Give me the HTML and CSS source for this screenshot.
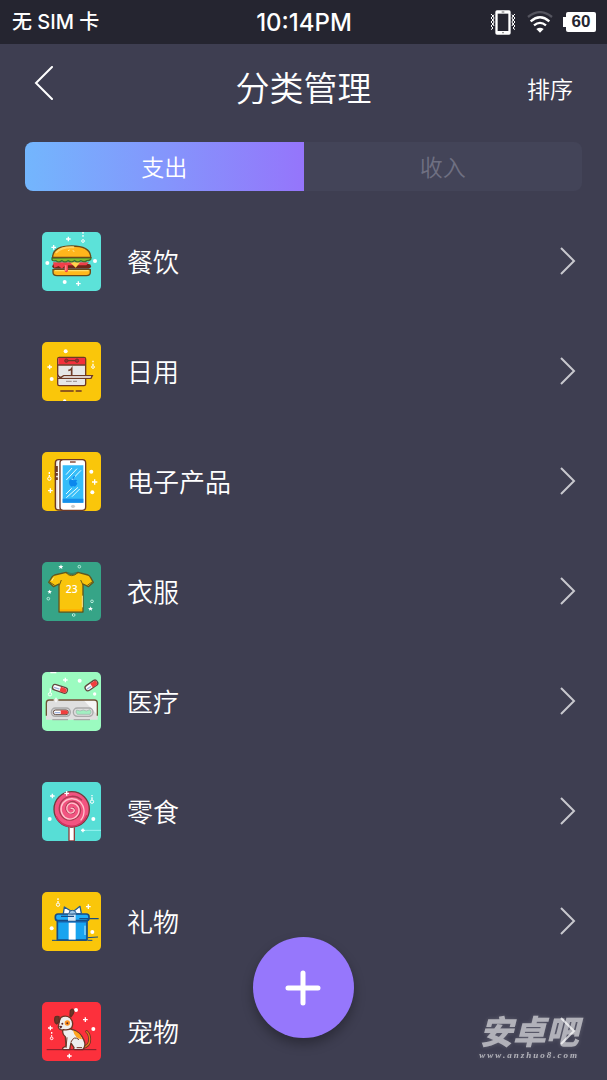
FILE: index.html
```html
<!DOCTYPE html>
<html lang="zh-CN">

<head>
    <meta charset="utf-8">
    <meta name="viewport" content="width=device-width, initial-scale=1.0">
    <title>分类管理</title>
    <link rel="stylesheet" href="styles.css">
</head>

<body>

    <div class="statusbar">
        <span class="carrier">无 SIM 卡</span>
        <span class="time">10:14PM</span>
        <div class="status_icons">
            <svg class="vibrate" viewBox="0 0 78 75">
                <rect x="16" y="1" width="46" height="73" rx="5" fill="#fff" />
                <rect x="23" y="11" width="32" height="52" fill="#252530" />
                <path d="M35 6h8M36 68h6" stroke="#999" stroke-width="4" />
                <path d="M3 12l6 6-6 6 6 6-6 6 6 6-6 6 6 6-6 5M12 14l-3 4 3 6-3 6 3 6-3 6 3 6M75 12l-6 6 6 6-6 6 6 6-6 6 6 6-6 6 6 5M66 14l3 4-3 6 3 6-3 6 3 6-3 6" fill="none" stroke="#fff" stroke-width="3" />
            </svg>
            <svg class="wifi" viewBox="0 0 78 66" fill="none" stroke-width="7">
                <path d="M3 18Q39-11 75 18" stroke="#55555f" />
                <path d="M11 31Q39 7 67 31M21 43Q39 28 57 43" stroke="#fff" />
                <path d="M28 54Q39 47 50 54L39 65z" fill="#fff" />
            </svg>
            <span class="battery">60</span>
        </div>
    </div>

    <header>
        <button class="back" aria-label="返回">
            <svg viewBox="0 0 20 34"><path d="M18 1L2 17l16 16" /></svg>
        </button>
        <h1>分类管理</h1>
        <button class="sort">排序</button>
    </header>

    <nav>
        <button class="filter valgt">支出</button>
        <button class="filter">收入</button>
    </nav>

    <main>
        <a class="kategori" href="#mad">
            <svg class="ikon" viewBox="18 20 177 177">
                <rect x="18" y="20" width="177" height="177" fill="#5ce2d9" />
                <g stroke="#fff" stroke-width="4"><path d="M97 34v14M90 41h14M53 59v14M46 66h14M127 168v14M120 175h14" /><path d="M141 20v18" stroke-dasharray="5 4" /></g>
                <circle cx="141" cy="47" r="4" fill="none" stroke="#fff" stroke-width="3" />
                <g fill="#fff"><circle cx="34" cy="113" r="6" /><circle cx="177" cy="107" r="6" /><circle cx="86" cy="170" r="6" /></g>
                <path d="M51 133h112v8q0 10-12 10H63q-12 0-12-10z" fill="#ffb91d" stroke="#6b4a18" stroke-width="4" />
                <path d="M56 136h102" stroke="#ffe06a" stroke-width="4" />
                <rect x="49" y="116" width="116" height="14" rx="7" fill="#6e2718" />
                <path d="M51 111h108l-8 9H96v15q0 6-5 6t-5-6v-14l-8 9-10-8-13 5z" fill="#ef3f49" />
                <path d="M89 120v17" stroke="#ff8288" stroke-width="5" />
                <path d="M102 111h31l-14 16z" fill="#ffd44b" />
                <path d="M48 98q-2 11 12 8 8 7 18 0 9 7 18 0 10 7 19 0 10 7 19 0 12 6 18 0 14 0 13-9z" fill="#83bd2f" stroke="#3e7130" stroke-width="4" />
                <path d="M50 96q0-34 57-34t57 34z" fill="#ffb51c" stroke="#6b4a18" stroke-width="4" />
                <path d="M61 81q16-17 51-15" fill="none" stroke="#ffd464" stroke-width="6" stroke-linecap="round" />
                <path d="M96 76l5-2m9 2l5 2" stroke="#fff0a0" stroke-width="3" />
            </svg>
            <span class="navn">餐饮</span>
            <svg class="pil" viewBox="0 0 16 28"><path d="M1 1l13 13L1 27" /></svg>
        </a>

        <a class="kategori" href="#daglig">
            <svg class="ikon" viewBox="18 19 177 177">
                <rect x="18" y="19" width="177" height="177" fill="#fac60a" />
                <g fill="#fff"><circle cx="89" cy="47" r="6" /><circle cx="47" cy="130" r="6" /><circle cx="86" cy="196" r="5" /></g>
                <path d="M41 87v14M34 94h14M171 75v5m0 4v4" stroke="#fff" stroke-width="4" />
                <circle cx="171" cy="94" r="4" fill="none" stroke="#fff" stroke-width="3" />
                <rect x="65" y="65" width="84" height="85" rx="5" fill="#e7e7e7" stroke="#6e3925" stroke-width="4" />
                <path d="M67 67h80v20H67z" fill="#f2303b" />
                <path d="M66 88h82" stroke="#6e3925" stroke-width="4" />
                <path d="M91 75h32" stroke="#6e3925" stroke-width="4" />
                <circle cx="91" cy="75" r="5" fill="#a72933" stroke="#6e3925" stroke-width="3" /><circle cx="123" cy="75" r="5" fill="#a72933" stroke="#6e3925" stroke-width="3" />
                <path d="M97 104q7 0 10-5v20" fill="none" stroke="#6e3925" stroke-width="5" />
                <path d="M65 117q2 8 10 8l8-5h86l-4 8H66" fill="#fff" stroke="#6e3925" stroke-width="4" />
                <path d="M90 137h17m4 0h12" stroke="#a69e9c" stroke-width="4" />
                <path d="M73 166h40m6 0h18" stroke="#6e3925" stroke-width="4" />
            </svg>
            <span class="navn">日用</span>
            <svg class="pil" viewBox="0 0 16 28"><path d="M1 1l13 13L1 27" /></svg>
        </a>

        <a class="kategori" href="#elektronik">
            <svg class="ikon" viewBox="18 19 177 177">
                <rect x="18" y="19" width="177" height="177" fill="#fac60a" />
                <g fill="#fff"><circle cx="166" cy="78" r="6" /><circle cx="169" cy="140" r="6" /></g>
                <path d="M176 101v16M168 109h16M43 128v14M36 135h14M40 79v6m0 3v5" stroke="#fff" stroke-width="4" />
                <circle cx="40" cy="99" r="5" fill="none" stroke="#fff" stroke-width="3" />
                <rect x="58" y="42" width="40" height="151" rx="10" fill="#ded8d6" stroke="#6e3925" stroke-width="4" />
                <path d="M67 45v145" stroke="#fff" stroke-width="5" />
                <path d="M61 61v18m0 3v8m0 5v8" stroke="#6e3925" stroke-width="9" />
                <rect x="72" y="42" width="77" height="152" rx="10" fill="#fff" stroke="#6e3925" stroke-width="4" />
                <path d="M80 59h62v112H80z" fill="#36bdf9" />
                <path d="M80 159h62v12H80z" fill="#168eea" />
                <path d="M102 49h17" stroke="#884e3b" stroke-width="4" />
                <path d="M90 87l18-20M91 103l32-34M107 103l28-29M90 145l17-17M91 156l35-31M108 153l23-23" stroke="#eaffff" stroke-width="3" />
                <path d="M108 102q-8-4-9 6 0 12 8 15l5-2 5 2q6-4 7-10-7-4 0-9-5-4-11 0z" fill="#0c88ed" />
                <path d="M111 100q1-7 6-7" fill="none" stroke="#0c88ed" stroke-width="4" />
                <ellipse cx="111" cy="182" rx="6" ry="5" fill="#ccc" />
            </svg>
            <span class="navn">电子产品</span>
            <svg class="pil" viewBox="0 0 16 28"><path d="M1 1l13 13L1 27" /></svg>
        </a>

        <a class="kategori" href="#toej">
            <svg class="ikon" viewBox="18 18 177 177">
                <rect x="18" y="18" width="177" height="177" fill="#36a487" />
                <path d="M90 49q18 13 36 0l30 8q6 3 8 8l8 14-15 13-16-8v84H69V84l-16 8-15-13 10-16q3-4 8-6z" fill="#f9c50c" stroke="#5f5720" stroke-width="4" stroke-linejoin="round" />
                <path d="M72 163h66" stroke="#ffae00" stroke-width="6" fill="none" />
                <path d="M90 50q16 18 36 0M76 72l-6 16M141 87l-7-15M41 78l15 10M168 78l-14 10" fill="none" stroke="#6d5b18" stroke-width="3" />
                <path d="M95 50q13 7 25 0" fill="none" stroke="#378365" stroke-width="5" />
                <path d="M53 65l-6 10M139 119v35" stroke="#ffe894" stroke-width="3" />
                <text class="nummer" x="107" y="111">23</text>
                <g fill="#fff"><path d="M75 25l2 5h5l-4 4 1 5-5-3-4 3 1-5-4-4h6zM41 101l2 4h5l-4 3 1 5-4-2-4 2 1-5-4-3h5zM164 151l2 5h5l-4 3 1 5-5-3-4 3 1-5-4-3h6z" /></g>
                <g fill="none" stroke="#b9eddd" stroke-width="3"><circle cx="130" cy="32" r="4" /><circle cx="37" cy="128" r="4" /><circle cx="168" cy="136" r="4" /><circle cx="113" cy="177" r="4" /></g>
            </svg>
            <span class="navn">衣服</span>
            <svg class="pil" viewBox="0 0 16 28"><path d="M1 1l13 13L1 27" /></svg>
        </a>

        <a class="kategori" href="#medicin">
            <svg class="ikon" viewBox="18 17 177 177">
                <rect x="18" y="17" width="177" height="177" fill="#9bfbc0" />
                <path d="M43 19h18M88 34v14M81 41h14M43 66v12" stroke="#fff" stroke-width="4" />
                <circle cx="131" cy="43" r="6" fill="#fff" /><circle cx="176" cy="83" r="5" fill="#fff" /><circle cx="42" cy="84" r="5" fill="none" stroke="#fff" stroke-width="3" />
                <path d="M30 109q0-10 10-10h135q10 0 10 10v51H30z" fill="#dfdfdf" />
                <path d="M143 102h34q7 0 7 7v36z" fill="#f6f6f6" />
                <path d="M31 148v-38q0-9 9-9h135q9 0 9 9v38" fill="none" stroke="#6b5534" stroke-width="4" />
                <path d="M49 160h47m17 0h49" stroke="#aaa" stroke-width="4" />
                <path d="M60 94v14M53 101h14" stroke="#fff" stroke-width="4" />
                <rect x="46" y="125" width="57" height="25" rx="12" fill="#d3d3d3" stroke="#aaa" stroke-width="4" />
                <rect x="112" y="125" width="59" height="25" rx="12" fill="#ddd" stroke="#aaa" stroke-width="4" />
                <path d="M122 131l10 3 10-3 9 3 11-4q7 7 0 14h-38q-7-7-2-13z" fill="#a2efc1" stroke="#9cb2a7" stroke-width="2" />
                <rect x="52" y="131" width="45" height="14" rx="7" fill="#fff" stroke="#624b41" stroke-width="3" />
                <path d="M74 132h16q6 0 6 6t-6 6H74z" fill="#f03e3e" /><path d="M56 139h16" stroke="#9fb4df" stroke-width="4" />
                <g transform="rotate(18 72 67)"><rect x="49" y="59" width="46" height="17" rx="8" fill="#fff" stroke="#624b41" stroke-width="4" /><path d="M73 61h13q7 0 7 7t-7 7H73z" fill="#f03e3e" /><path d="M54 69h17" stroke="#9fb4df" stroke-width="4" /></g>
                <g transform="rotate(-35 166 57)"><rect x="145" y="49" width="42" height="17" rx="8" fill="#fff" stroke="#624b41" stroke-width="4" /><path d="M166 51h12q7 0 7 7t-7 7h-12z" fill="#f03e3e" /><path d="M149 59h15" stroke="#9fb4df" stroke-width="4" /></g>
            </svg>
            <span class="navn">医疗</span>
            <svg class="pil" viewBox="0 0 16 28"><path d="M1 1l13 13L1 27" /></svg>
        </a>

        <a class="kategori" href="#snacks">
            <svg class="ikon" viewBox="18 19 177 177">
                <rect x="18" y="19" width="177" height="177" fill="#57ded6" />
                <path d="M99 148h16v48H99z" fill="#fff" stroke="#8e4040" stroke-width="4" />
                <path d="M99 150h16v7H99z" fill="#c9b1ac" />
                <circle cx="107" cy="101" r="53" fill="#f25481" stroke="#703c3c" stroke-width="4" />
                <path d="M60 122A50 50 0 0 0 153 119" fill="none" stroke="#ce3561" stroke-width="5" />
                <path d="M106 103a5 5 0 0 1 5-7a10 10 0 0 1 3 15a16 16 0 0 1-24-9a21 21 0 0 1 25-24a27 27 0 0 1 17 35a33 33 0 0 1-48 15a37 37 0 0 1-7-51a41 41 0 0 1 61-3" fill="none" stroke="#a93c53" stroke-width="4" />
                <path d="M104 99a7 7 0 0 1 11 6a11 11 0 0 1-18 4a16 16 0 0 1 5-26a22 22 0 0 1 27 22a27 27 0 0 1-41 21a32 32 0 0 1-7-44a36 36 0 0 1 51-4a41 41 0 0 1 2 56" fill="none" stroke="#ffc4cd" stroke-width="4" />
                <path d="M49 54v14M42 61h14M92 46v14M85 53h14M168 58v4m0 3v7" stroke="#fff" stroke-width="4" />
                <circle cx="168" cy="78" r="5" fill="none" stroke="#fff" stroke-width="3" />
                <g fill="#fff"><circle cx="41" cy="130" r="6" /><circle cx="172" cy="130" r="6" /><circle cx="140" cy="164" r="4" /></g>
                <path d="M136 164h59" stroke="#baffff" stroke-width="2" />
                <path d="M135 164h12M141 158v12" stroke="#fff" stroke-width="3" />
            </svg>
            <span class="navn">零食</span>
            <svg class="pil" viewBox="0 0 16 28"><path d="M1 1l13 13L1 27" /></svg>
        </a>

        <a class="kategori" href="#gaver">
            <svg class="ikon" viewBox="18 18 177 177">
                <rect x="18" y="18" width="177" height="177" fill="#fac60a" />
                <path d="M157 55v14M150 62h14M66 37v5m0 3v5" stroke="#fff" stroke-width="4" />
                <circle cx="66" cy="56" r="5" fill="none" stroke="#fff" stroke-width="3" />
                <circle cx="47" cy="127" r="6" fill="#fff" /><circle cx="169" cy="138" r="6" fill="#fff" />
                <path d="M64 101h89v61H64z" fill="#18a4ef" stroke="#174c85" stroke-width="5" />
                <path d="M98 102h21v59H98z" fill="#fff" /><path d="M66 102h85v8H66z" fill="#1876c3" />
                <path d="M147 119v28" stroke="#bceeff" stroke-width="3" />
                <rect x="58" y="84" width="101" height="20" rx="8" fill="#20adf8" stroke="#174c85" stroke-width="5" />
                <path d="M96 84h23v20H96z" fill="#d5e6f5" />
                <path d="M82 83l3-20 25 15 22-17 4 21-27 2z" fill="#fff" stroke="#275c8f" stroke-width="4" stroke-linejoin="round" />
                <path d="M99 82q0-9 10-9t12 9" fill="#9fc9ea" stroke="#275c8f" stroke-width="3" />
                <path d="M130 98h58" stroke="#174c85" stroke-width="4" /><path d="M75 91h39" stroke="#174c85" stroke-width="4" />
                <path d="M48 163h104m4 0h13M155 155l31-2" stroke="#174c85" stroke-width="3" />
            </svg>
            <span class="navn">礼物</span>
            <svg class="pil" viewBox="0 0 16 28"><path d="M1 1l13 13L1 27" /></svg>
        </a>

        <a class="kategori" href="#kaeledyr">
            <svg class="ikon" viewBox="18 20 177 177">
                <rect x="18" y="20" width="177" height="177" fill="#fc303c" />
                <path d="M148 66v14M141 73h14M43 91v14M36 98h14M100 175v14M93 182h14M47 110v5" stroke="#fff" stroke-width="4" />
                <circle cx="47" cy="129" r="4" fill="none" stroke="#fff" stroke-width="3" />
                <path d="M47 119v5" stroke="#fff" stroke-width="3" />
                <circle cx="120" cy="44" r="6" fill="#fff" /><circle cx="172" cy="101" r="6" fill="#fff" />
                <path d="M138 157q24-4 23-26-1-16-9-22" fill="none" stroke="#6e3525" stroke-width="9" stroke-linecap="round" />
                <path d="M138 157q24-4 23-26-1-16-9-22" fill="none" stroke="#e37b1c" stroke-width="4" stroke-linecap="round" />
                <path d="M82 98q-6 17 6 26l2 28-10 6q-1 5 6 5h15l4-20 9 14q-3 5 3 6h23q12-12 3-30-10-23-38-32z" fill="#eee" stroke="#6e3525" stroke-width="4" stroke-linejoin="round" />
                <path d="M111 105q24 7 27 27-22-2-27-27z" fill="#ffa51f" />
                <path d="M93 126l-3 32M105 140q9-20 24-7M122 157h16" fill="none" stroke="#6e3525" stroke-width="3" />
                <path d="M75 66q14-8 27 1 13 15 5 30-9 9-24 6-14 3-16-8l3-18z" fill="#eee" stroke="#6e3525" stroke-width="4" />
                <circle cx="94" cy="83" r="8" fill="#ff9423" /><circle cx="94" cy="84" r="3" fill="#5b2727" /><circle cx="79" cy="85" r="3" fill="#5b2727" />
                <path d="M69 64q-13-4-13 8-1 10 6 14l8-7zM102 62l1-16q6-9 10 0 2 8-8 18z" fill="#6b3728" stroke="#602e24" stroke-width="4" />
                <path d="M69 93q7-4 10 1l-5 6z" fill="#5b2727" />
                <path d="M32 163h149" stroke="#78202b" stroke-width="3" />
            </svg>
            <span class="navn">宠物</span>
            <svg class="pil" viewBox="0 0 16 28"><path d="M1 1l13 13L1 27" /></svg>
        </a>
    </main>

    <button class="tilfoej" aria-label="添加">
        <svg viewBox="0 0 36 36"><path d="M18 3v30M3 18h30" /></svg>
    </button>

    <div class="vandmaerke">
        <strong>安卓吧</strong>
        <span>www.anzhuo8.com</span>
    </div>

</body>

</html>
```

FILE: styles.css
```css
* {
    box-sizing: border-box;
}

body {
    margin: 0;
    height: 100vh;
    display: flex;
    flex-direction: column;
    overflow: hidden;
    background-color: #3e3e51;
    color: white;
    font-family: "Noto Sans CJK SC", sans-serif;
    font-weight: 350;
}

button {
    margin: 0;
    padding: 0;
    border: none;
    background: none;
    color: inherit;
    font: inherit;
}

svg {
    display: block;
}

/* statusbar */
.statusbar {
    flex: none;
    height: 44px;
    padding: 0 11px 0 12px;
    display: grid;
    grid-template-columns: 1fr auto 1fr;
    align-items: center;
    background-color: #252530;
}

.carrier {
    font-family: "Inter", "Noto Sans CJK SC", sans-serif;
    font-size: 20px;
    line-height: 28px;
    font-weight: 500;
}

.time {
    font-family: "Inter", sans-serif;
    font-size: 24px;
    font-weight: 500;
}

.status_icons {
    display: flex;
    justify-content: flex-end;
    align-items: center;
    gap: 11px;
}

.vibrate {
    width: 26px;
    height: 25px;
}

.wifi {
    width: 26px;
    height: 22px;
}

.battery {
    position: relative;
    width: 30px;
    height: 20px;
    margin-left: 2px;
    border-radius: 2px;
    background-color: white;
    color: #252530;
    font-family: "Liberation Sans", sans-serif;
    font-size: 17px;
    font-weight: 700;
    line-height: 20px;
    text-align: center;
}

.battery::before {
    content: "";
    position: absolute;
    left: -3px;
    top: 5px;
    width: 3px;
    height: 10px;
    background-color: white;
}

/* top */
header {
    flex: none;
    height: 98px;
    padding: 0 34px;
    display: grid;
    grid-template-columns: 1fr auto 1fr;
    align-items: center;
}

.back {
    justify-self: start;
    padding-bottom: 20px;
}

.back svg {
    width: 20px;
    height: 34px;
}

.back path {
    fill: none;
    stroke: white;
    stroke-width: 2;
    stroke-linecap: round;
}

h1 {
    margin: 0 0 12px;
    font-size: 34px;
    line-height: 50px;
    font-weight: 350;
}

.sort {
    justify-self: end;
    margin-bottom: 10px;
    font-size: 23px;
    line-height: 34px;
}

/* faner */
nav {
    flex: none;
    display: flex;
    height: 49px;
    margin: 0 25px;
    border-radius: 8px;
    background-color: #434458;
    overflow: hidden;
}

.filter {
    flex: 1;
    padding-bottom: 2px;
    color: #6f7082;
    font-size: 23px;
}

.valgt {
    background-image: linear-gradient(to right, #73b6fd, #9575fb);
    color: white;
}

/* liste */
main {
    flex: 1;
    min-height: 0;
    padding-top: 15px;
    overflow-y: auto;
    scrollbar-width: none;
}

.kategori {
    display: flex;
    align-items: center;
    height: 110px;
    padding: 0 31px 0 42px;
    color: white;
    text-decoration: none;
}

.ikon {
    width: 59px;
    height: 59px;
    border-radius: 5px;
}

.nummer {
    font-family: "Open Sans", sans-serif;
    font-size: 31px;
    font-weight: 600;
    fill: white;
    text-anchor: middle;
}

.navn {
    flex: 1;
    margin-left: 26px;
    font-size: 26px;
    line-height: 38px;
}

.pil {
    width: 16px;
    height: 28px;
    fill: none;
    stroke: #c8c8ce;
    stroke-width: 2;
}

/* plus-knap */
.tilfoej {
    position: fixed;
    left: 50%;
    bottom: 42px;
    width: 101px;
    height: 101px;
    margin-left: -51px;
    display: flex;
    justify-content: center;
    align-items: center;
    border-radius: 50%;
    background-color: #9677fc;
    box-shadow: 0 6px 12px rgba(0, 0, 0, .3);
}

.tilfoej svg {
    width: 36px;
    height: 36px;
    stroke: white;
    stroke-width: 5;
    stroke-linecap: round;
}

.vandmaerke {
    position: fixed;
    right: 28px;
    bottom: 20px;
    display: flex;
    flex-direction: column;
    align-items: center;
    color: white;
    opacity: .6;
    font-style: italic;
    text-shadow: 0 0 4px rgba(255, 255, 255, .3);
    pointer-events: none;
}

.vandmaerke strong {
    font-size: 33px;
    line-height: 40px;
    font-weight: 900;
}

.vandmaerke span {
    font-family: "Liberation Serif", serif;
    font-size: 9px;
    font-weight: 700;
    line-height: 10px;
    letter-spacing: 2px;
}
```
